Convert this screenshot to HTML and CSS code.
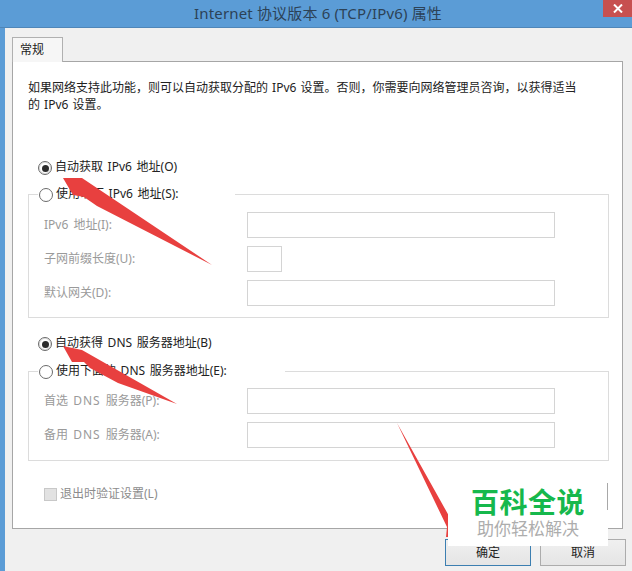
FILE: index.html
```html
<!DOCTYPE html>
<html lang="zh-CN">
<head>
<meta charset="utf-8">
<title>Internet 协议版本 6 (TCP/IPv6) 属性</title>
<link rel="stylesheet" href="styles.css">
</head>
<body>
<div class="titlebar">
  <span></span>
  <h1 class="title">Internet 协议版本 6 (TCP/IPv6) 属性</h1>
  <button class="close" type="button" aria-label="关闭">
    <svg width="10" height="9" viewBox="0 0 10 9"><path d="M1 .5l8 8M9 .5l-8 8" stroke="#fff" stroke-width="2" fill="none"/></svg>
  </button>
</div>
<div class="window">
  <div class="tabs"><div class="tab">常规</div></div>
  <div class="panel">
    <p class="intro">如果网络支持此功能，则可以自动获取分配的 IPv6 设置。否则，你需要向网络管理员咨询，以获得适当<br>的 IPv6 设置。</p>
    <div class="option option-first"><span class="radio checked"></span><span>自动获取 IPv6 地址(O)</span></div>
    <fieldset class="group group-ip">
      <legend class="legend legend-ip"><span class="radio"></span><span>使用以下 IPv6 地址(S):</span></legend>
      <div class="fields">
        <label class="field-label">IPv6 地址(I):</label><div class="input"></div>
        <label class="field-label">子网前缀长度(U):</label><div class="input input-short"></div>
        <label class="field-label">默认网关(D):</label><div class="input"></div>
      </div>
    </fieldset>
    <div class="option option-dns"><span class="radio checked"></span><span>自动获得 DNS 服务器地址(B)</span></div>
    <fieldset class="group group-dns">
      <legend class="legend legend-dns"><span class="radio"></span><span>使用下面的 DNS 服务器地址(E):</span></legend>
      <div class="fields">
        <label class="field-label">首选 <span class="wide">DNS</span> 服务器(P):</label><div class="input"></div>
        <label class="field-label">备用 <span class="wide">DNS</span> 服务器(A):</label><div class="input"></div>
      </div>
    </fieldset>
    <div class="verify"><span class="checkbox"></span><span>退出时验证设置(L)</span></div>
  </div>
  <div class="footer">
    <button class="btn btn-primary" type="button">确定</button>
    <button class="btn" type="button">取消</button>
  </div>
</div>
<svg class="arrows" width="632" height="571" viewBox="0 0 632 571">
  <path d="M63 178L82 178L212 265L97 206L84 197L73 195Z" fill="#e8403f"/>
  <path d="M63 346L82 350L177 404L118 383L90 368L84 362L72 362Z" fill="#e8403f"/>
  <path d="M397 423L449 516V537H446L447 527Z" fill="#e8403f"/>
</svg>
<div class="watermark">
  <div class="wm-title">百科全说</div>
  <div class="wm-sub">助你轻松解决</div>
  <span class="wm-edge"></span>
</div>
</body>
</html>
```
FILE: styles.css
```css
* { box-sizing: border-box; }
html, body { margin: 0; padding: 0; }
body {
  width: 632px;
  height: 571px;
  overflow: hidden;
  position: relative;
  background: #5b9cd6;
  font: 12px/16px "Noto Sans", "Noto Sans CJK SC", sans-serif;
  color: #222;
}
.titlebar {
  height: 28px;
  padding-left: 4px;
  display: grid;
  grid-template-columns: 1fr auto 1fr;
  align-items: start;
  border-bottom: 1px solid #4f86b8;
}
.title {
  margin: 3px 0 0;
  font: 400 15px/20px "Noto Sans", "Noto Sans CJK SC", sans-serif;
  letter-spacing: .16px;
  color: #2c4257;
}
.close {
  justify-self: end;
  width: 29px;
  height: 17px;
  padding: 0;
  border: 0;
  background: #c75050;
  display: flex;
  align-items: center;
  justify-content: center;
}
.window {
  margin-left: 5px;
  height: 543px;
  padding: 9px 0 0 7px;
  background: #f0f0f0;
}
.tabs { display: flex; }
.tab {
  position: relative;
  z-index: 1;
  width: 51px;
  height: 25px;
  margin-bottom: -1px;
  padding: 4px 0 0 7px;
  background: #f6f6f6;
  border: 1px solid #b0b0b0;
  border-bottom: 0;
}
.panel {
  width: 611px;
  padding: 0 14px 26px 15px;
  background: #fff;
  border: 1px solid #a6a6a6;
}
.intro { margin: 17px 0 0; line-height: 17px; word-spacing: 1px; }
.option, .legend, .verify { display: flex; align-items: center; }
.option, .legend { word-spacing: 1.5px; }
.option { margin-left: 10px; }
.option-first { margin-top: 46px; }
.option-dns { margin-top: 17px; }
.radio {
  flex: none;
  width: 14px;
  height: 14px;
  margin-top: 2px;
  margin-right: 3px;
  border: 1px solid #6b6b6b;
  border-radius: 50%;
  background: #fff;
  display: flex;
  align-items: center;
  justify-content: center;
}
.radio.checked { box-shadow: inset 0 0 0 1px #dedede; }
.radio.checked::after {
  content: "";
  width: 7px;
  height: 7px;
  border-radius: 50%;
  background: #2b2b2b;
}
.group {
  margin: 11px 0 0;
  padding: 10px 0 11px;
  width: 581px;
  border: 1px solid #dcdcdc;
  min-inline-size: 0;
}
.group-dns { margin-top: 12px; padding-top: 9px; padding-bottom: 12px; }
.legend { margin-left: 9px; padding: 0 0 0 1px; height: 16px; }
.legend-ip { width: 197px; }
.legend-dns { width: 247px; }
.fields {
  display: grid;
  grid-template-columns: 203px 308px;
  row-gap: 8px;
  padding-left: 15px;
  align-items: center;
  word-spacing: 2px;
}
.field-label { color: #9a9a9a; }
.wide { letter-spacing: 1px; }
.input {
  width: 308px;
  height: 26px;
  background: #fff;
  border: 1px solid #d4d4d4;
}
.input-short { width: 35px; }
.verify { margin: 25px 0 0 16px; color: #8c8c8c; }
.checkbox {
  flex: none;
  width: 13px;
  height: 13px;
  margin-right: 3px;
  background: #e2e2e2;
  border: 1px solid #c8c8c8;
}
.footer {
  display: flex;
  justify-content: flex-end;
  gap: 9px;
  margin-top: 10px;
  padding-right: 6px;
}
.btn {
  width: 86px;
  height: 27px;
  padding: 0;
  font: inherit;
  color: #222;
  background: linear-gradient(#f0f0f0, #e5e5e5);
  border: 1px solid #acacac;
}
.btn-primary { border-color: #3c7fb1; }
.arrows { position: absolute; left: 0; top: 0; pointer-events: none; }
.watermark {
  position: absolute;
  left: 448px;
  top: 480px;
  width: 160px;
  height: 66px;
  background: #fff;
  text-align: center;
}
.wm-title {
  margin-top: 6px;
  font: 700 28px/30px "Noto Sans CJK SC", sans-serif;
  letter-spacing: .5px;
  color: #16b84c;
}
.wm-sub {
  margin-top: 1px;
  font: 400 17px/22px "Noto Sans CJK SC", sans-serif;
  color: #adadad;
}
.wm-edge {
  position: absolute;
  right: 0;
  top: 3px;
  width: 1px;
  height: 27px;
  background: #a8a8a8;
}
```
